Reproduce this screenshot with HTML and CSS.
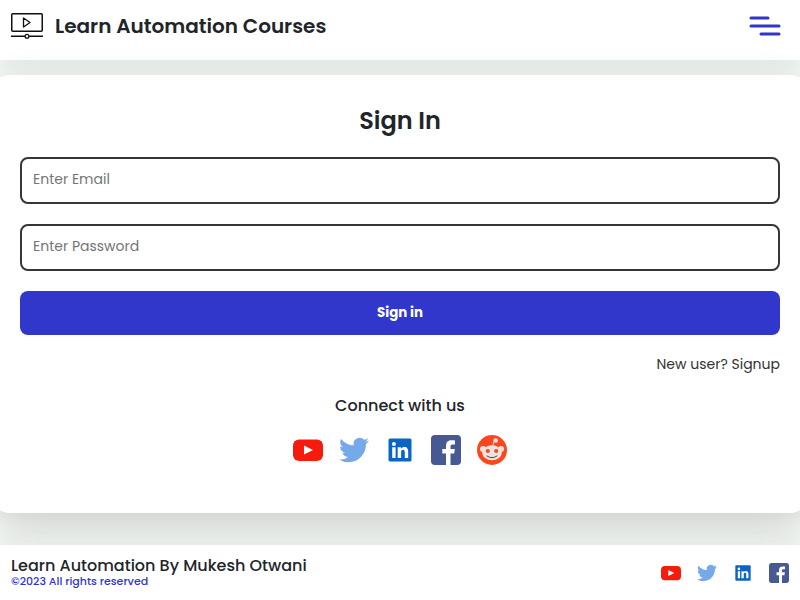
FILE: index.html
```html
<!DOCTYPE html>
<html lang="en">
<head>
<meta charset="utf-8">
<meta name="viewport" content="width=device-width, initial-scale=1">
<title>Learn Automation Courses</title>
<link rel="stylesheet" href="styles.css">
</head>
<body>
<svg class="sprite" aria-hidden="true">
  <symbol id="youtube" viewBox="0 0 30 30">
    <rect y="4.500" width="30" height="21.500" rx="6" fill="#f61c0d"/>
    <path d="M11 10.500v9l9-4.500z" fill="#fff"/>
  </symbol>
  <symbol id="twitter" viewBox="0 0 24 24">
    <path fill="#76a9ea" d="M23.950 4.570a10 10 0 0 1-2.820.770 4.960 4.960 0 0 0 2.160-2.720c-.950.550-2 .950-3.130 1.180a4.920 4.920 0 0 0-8.380 4.480C7.690 8.090 4.070 6.130 1.640 3.160a4.820 4.820 0 0 0-.670 2.480c0 1.710.870 3.210 2.190 4.100a4.900 4.900 0 0 1-2.230-.620v.060a4.920 4.920 0 0 0 3.950 4.830 5 5 0 0 1-2.210.080 4.940 4.940 0 0 0 4.600 3.420A9.870 9.870 0 0 1 0 19.540a14 14 0 0 0 7.550 2.210c9.050 0 14-7.500 14-13.980 0-.210 0-.420-.020-.630a9.940 9.940 0 0 0 2.460-2.550z"/>
  </symbol>
  <symbol id="linkedin" viewBox="0 0 30 30">
    <rect x="3.500" y="3.500" width="23" height="23" rx="1.500" fill="#0a66c2"/>
    <circle cx="8.900" cy="8.900" r="2" fill="#fff"/>
    <path fill="#fff" d="M7.200 12.200h3.400V23H7.200zM12.700 12.200H16v1.500c.7-1.200 1.900-1.800 3.300-1.800 3.100 0 3.900 2.100 3.900 5V23h-3.400v-5.300c0-1.500-.2-2.900-1.800-2.900s-1.900 1.300-1.900 2.800V23h-3.400z"/>
  </symbol>
  <symbol id="facebook" viewBox="0 0 30 30">
    <rect width="30" height="30" rx="4" fill="#475993"/>
    <path fill="#fff" d="M15 30V18.500h-3.700V14H15v-3.300c0-3.900 2.300-5.500 5.800-5.500 1.600 0 2.700.1 3.200.2v4h-2.300c-1.800 0-2.200.9-2.200 2.200V14h4.300l-.6 4.500h-3.700V30z"/>
  </symbol>
  <symbol id="reddit" viewBox="0 0 30 30">
    <circle cx="15" cy="15" r="15" fill="#fc471e"/>
    <path d="M16 11l.5-4 2.500-1.500" fill="none" stroke="#e8e4df" stroke-width="1"/>
    <g fill="#e8e4df">
      <circle cx="18.700" cy="5.500" r="2.300"/>
      <circle cx="6" cy="14" r="3"/>
      <circle cx="24" cy="14" r="3"/>
      <ellipse cx="15" cy="17.800" rx="9.800" ry="7.500"/>
    </g>
    <circle cx="10.800" cy="16" r="2.100" fill="#fc471e"/>
    <circle cx="19.200" cy="16" r="2.100" fill="#fc471e"/>
    <path d="M10 21q5 3.500 10 0" fill="none" stroke="#5b4440" stroke-width="1" stroke-linecap="round"/>
  </symbol>
</svg>

<header class="topbar">
  <a class="brand" href="#">
    <svg class="brand-logo" viewBox="0 0 32 26" fill="none" stroke="#111" aria-hidden="true">
      <rect x=".75" y=".75" width="30.500" height="17.500" rx="1" stroke-width="1.500"/>
      <path d="M12.500 5v9l6.500-4.500z" stroke-width="1.300" stroke-linejoin="round"/>
      <path d="M0 23.300h14M18 23.300h14" stroke-width="1.500"/>
      <circle cx="16" cy="23.300" r="1.900" stroke-width="1.300"/>
    </svg>
    <span class="brand-name">Learn Automation Courses</span>
  </a>
  <button class="menu-button" type="button" aria-label="Menu">
    <svg class="menu-icon" viewBox="0 0 32 20" stroke="#3135cc" stroke-width="3" stroke-linecap="round" aria-hidden="true">
      <path d="M2 2h17M2 10h28M12 18h18"/>
    </svg>
  </button>
</header>

<main class="page">
  <section class="card">
    <form class="login">
      <h2 class="title">Sign In</h2>
      <input class="field" type="email" placeholder="Enter Email" aria-label="Email">
      <input class="field" type="password" placeholder="Enter Password" aria-label="Password">
      <button class="submit" type="submit">Sign in</button>
      <a class="signup" href="#">New user? Signup</a>
    </form>
    <h3 class="connect">Connect with us</h3>
    <nav class="social" aria-label="Social links">
      <a href="#" aria-label="YouTube"><svg><use href="#youtube"/></svg></a>
      <a href="#" aria-label="Twitter"><svg><use href="#twitter"/></svg></a>
      <a href="#" aria-label="LinkedIn"><svg><use href="#linkedin"/></svg></a>
      <a href="#" aria-label="Facebook"><svg><use href="#facebook"/></svg></a>
      <a href="#" aria-label="Reddit"><svg><use href="#reddit"/></svg></a>
    </nav>
  </section>
</main>

<footer class="footer">
  <div>
    <p class="owner">Learn Automation By Mukesh Otwani</p>
    <p class="rights">©2023 All rights reserved</p>
  </div>
  <nav class="social social-small" aria-label="Footer social links">
    <a href="#" aria-label="YouTube"><svg><use href="#youtube"/></svg></a>
    <a href="#" aria-label="Twitter"><svg><use href="#twitter"/></svg></a>
    <a href="#" aria-label="LinkedIn"><svg><use href="#linkedin"/></svg></a>
    <a href="#" aria-label="Facebook"><svg><use href="#facebook"/></svg></a>
  </nav>
</footer>
</body>
</html>
```
FILE: styles.css
```css
* {
  box-sizing: border-box;
  margin: 0;
}

body {
  display: flex;
  flex-direction: column;
  min-height: 100vh;
  overflow-x: hidden;
  background: #f6f9f6;
  color: #212529;
  font-family: Poppins, Inter, sans-serif;
}

a {
  color: inherit;
  text-decoration: none;
}

.sprite {
  position: absolute;
  width: 0;
  height: 0;
}

.topbar {
  display: flex;
  align-items: center;
  justify-content: space-between;
  padding: 10px 19px 18px 11px;
  background: #fff;
  box-shadow: 0 8px 24px rgba(149, 165, 160, 0.2);
}

.brand {
  display: flex;
  align-items: center;
  gap: 12px;
}

.brand-logo {
  width: 32px;
  height: 26px;
}

.brand-name {
  font-size: 20px;
  line-height: 32px;
  font-weight: 600;
}

.menu-button {
  display: flex;
  padding: 0;
  border: 0;
  background: none;
}

.menu-icon {
  width: 32px;
  height: 20px;
}

.page {
  flex: 1;
  padding: 15px 0 32px;
}

.card {
  margin: 0 -10px;
  padding: 29px 30px 48px;
  border-radius: 20px;
  background: #fff;
  box-shadow: 0 13px 40px -5px rgba(50, 50, 50, 0.25);
}

.login {
  display: flex;
  flex-direction: column;
  gap: 20px;
}

.title {
  font-size: 24px;
  line-height: 33px;
  font-weight: 600;
  text-align: center;
}

.field {
  height: 47px;
  padding: 0 11px 2px;
  border: 2px solid #363636;
  border-radius: 8px;
  background: #fff;
  font-family: inherit;
  font-size: 14px;
}

.field::placeholder {
  color: #757575;
}

.submit {
  height: 44px;
  border: 0;
  border-radius: 8px;
  background: #3137ca;
  color: #fff;
  font-family: inherit;
  font-weight: 700;
}

.signup {
  align-self: flex-end;
  color: #333;
  font-size: 14px;
  line-height: 18px;
}

.connect {
  margin-top: 21px;
  font-size: 16px;
  line-height: 24px;
  font-weight: 500;
  text-align: center;
}

.social {
  display: flex;
  justify-content: center;
  gap: 16px;
  margin-top: 17px;
}

.social a,
.social svg {
  display: block;
  width: 30px;
  height: 30px;
}

.footer {
  display: flex;
  align-items: center;
  justify-content: space-between;
  padding: 11px;
  background: #fff;
  box-shadow: 0 -4px 24px rgba(149, 165, 165, 0.15);
}

.owner {
  font-size: 16px;
  line-height: 19px;
  font-weight: 500;
}

.rights {
  padding-bottom: 1px;
  color: #3135cc;
  font-size: 11px;
  line-height: 13px;
  font-weight: 500;
}

.social-small {
  margin-top: 0;
}

.social-small a,
.social-small svg {
  width: 20px;
  height: 20px;
}
```
